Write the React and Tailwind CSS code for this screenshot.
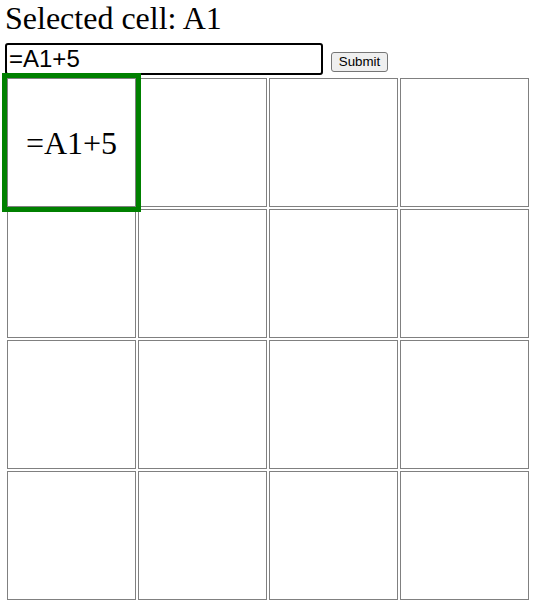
export default function App() {
  const cells = Array.from({ length: 16 }, (_, i) => i);
  return (
    <div className="pl-[5px] bg-white min-h-[615px] text-black">
      <div className="text-[32px] leading-[37px] font-['Liberation_Serif',serif]">
        Selected cell: A1
      </div>
      <div className="flex items-end mt-[6px]">
        <input
          className="w-[318px] h-[32px] border-2 border-black rounded-[3px] px-[2px] text-[24px] font-['Liberation_Sans',Arial,sans-serif] outline-none"
          defaultValue="=A1+5"
        />
        <button className="ml-[8px] mb-[3px] h-[20px] w-[57px] bg-[#efefef] border border-[#767676] rounded-[3px] text-[13.33px] leading-none font-['Liberation_Sans',Arial,sans-serif]">
          Submit
        </button>
      </div>
      <div className="grid grid-cols-[repeat(4,129px)] gap-[2px] p-[2px] mt-[1px] w-max">
        {cells.map((i) => (
          <div
            key={i}
            className={
              i === 0
                ? "h-[129px] border border-[#808080] flex items-center justify-center text-[32px] font-['Liberation_Serif',serif] outline-[5px] outline-solid outline-[#008000] relative"
                : "h-[129px] border border-[#808080]"
            }
          >
            {i === 0 ? "=A1+5" : null}
          </div>
        ))}
      </div>
    </div>
  );
}
